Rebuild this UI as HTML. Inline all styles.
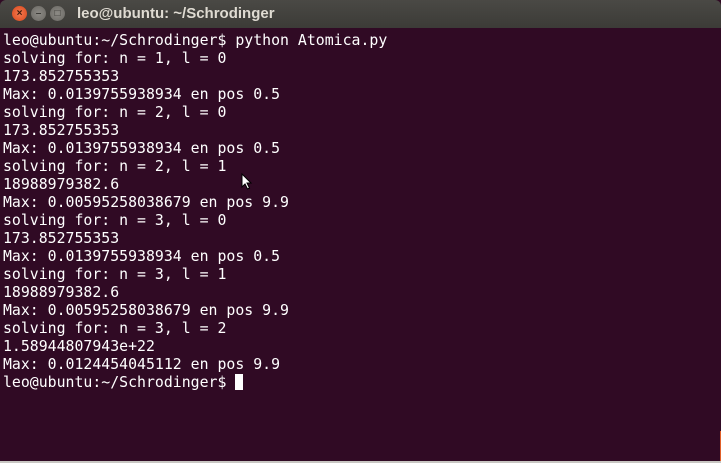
<!DOCTYPE html>
<html><head><style>
html,body{margin:0;padding:0;width:721px;height:463px;overflow:hidden;background:#300a24;}
.title{position:absolute;left:0;top:0;width:721px;height:28px;background:linear-gradient(#4a4945,#3c3b37);border-radius:6px 6px 0 0;}
.title span{position:absolute;left:77px;top:5px;font:bold 15px "Liberation Sans",sans-serif;color:#dfdbd2;}
.btn{position:absolute;top:6px;width:15px;height:15px;border-radius:50%;font:bold 10px "Liberation Sans",sans-serif;text-align:center;line-height:15px;}
.term{position:absolute;left:3px;top:31px;font:14.85px "DejaVu Sans Mono",monospace;line-height:18px;color:#fff;white-space:pre;}
.cur{display:inline-block;width:8px;height:16px;background:#fff;vertical-align:-3px;}
</style></head><body>
<div class="title">
<div class="btn" style="left:12px;background:radial-gradient(#f37b52,#d8461a);color:#3c1a0c">×</div>
<div class="btn" style="left:31px;background:radial-gradient(#8c8a85,#6a6863);color:#3c3b37">–</div>
<div class="btn" style="left:50px;background:radial-gradient(#8c8a85,#6a6863);color:#3c3b37">□</div>
<span>leo@ubuntu: ~/Schrodinger</span>
</div>
<div class="term">leo@ubuntu:~/Schrodinger$ python Atomica.py
solving for: n = 1, l = 0
173.852755353
Max: 0.0139755938934 en pos 0.5
solving for: n = 2, l = 0
173.852755353
Max: 0.0139755938934 en pos 0.5
solving for: n = 2, l = 1
18988979382.6
Max: 0.00595258038679 en pos 9.9
solving for: n = 3, l = 0
173.852755353
Max: 0.0139755938934 en pos 0.5
solving for: n = 3, l = 1
18988979382.6
Max: 0.00595258038679 en pos 9.9
solving for: n = 3, l = 2
1.58944807943e+22
Max: 0.0124454045112 en pos 9.9
leo@ubuntu:~/Schrodinger$ <span class="cur"></span></div>
<svg style="position:absolute;left:241px;top:173px" width="12" height="18" viewBox="0 0 12 18"><path d="M1 1 L1 14 L4 11 L6.5 16 L8.5 15 L6 10 L10 10 Z" fill="#fff" stroke="#000" stroke-width="1"/></svg>
<div style="position:absolute;left:0;top:461px;width:721px;height:2px;background:#c8c6c2"></div>
<div style="position:absolute;left:720px;top:431px;width:1px;height:30px;background:#e0602a"></div>
</body></html>
